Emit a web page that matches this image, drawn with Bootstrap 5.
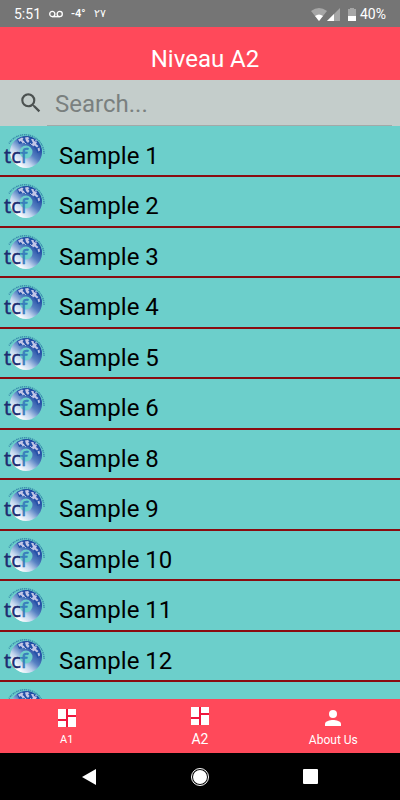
<!DOCTYPE html>
<html lang="en">
<head>
<meta charset="utf-8">
<meta name="viewport" content="width=device-width, initial-scale=1">
<title>Niveau A2</title>
<link href="https://cdn.jsdelivr.net/npm/bootstrap@5.3.0/dist/css/bootstrap.min.css" rel="stylesheet">
<style>
  body { font-family: Roboto, "Liberation Sans", sans-serif; background: #6ccfcb; }
  svg { display: block; flex: none; }
  .status-bar { height: 27px; background: #757575; color: #fff; font-size: 14px; line-height: 20px; padding: 1px 14px 0; }
  .status-bar .status-note { font-size: 11px; }
  .title-bar { height: 53px; background: #ff495a; color: #fff; padding: 9px 0 0 10px; }
  .title-bar h1 { font-size: 24px; line-height: 46px; font-weight: 400; }
  .search-bar { height: 46px; background: #c4cdcb; padding: 0 8px 0 18px; }
  .search-bar input { border: 0; border-bottom: 1px solid #a2a9a8; border-radius: 0; background: transparent; font-size: 24px; line-height: 36px; padding: 6px 8px 3px; margin-left: 3px; }
  .search-bar input:focus { background: transparent; box-shadow: none; border-color: #757575; }
  .search-bar input::placeholder { color: #7a807f; opacity: 1; }
  .sample-list { min-height: 0; background: #6ccfcb; padding-top: 1px; }
  .sample-list a { display: flex; height: 50px; border-bottom: 2px solid #8a0c10; color: #000; text-decoration: none; font-size: 24px; line-height: 30px; padding: 3px 0 0 2px; }
  .sample-list li:nth-child(even) a { height: 51px; }
  .sample-list .sample-name { padding: 11px 0 0 11px; }
  .tab-bar { height: 54px; background: #ff495a; }
  .tab-bar a { color: #fff; text-decoration: none; font-size: 11px; line-height: 16px; padding-top: 10px; gap: 5px; }
  .tab-bar a.about { font-size: 12px; }
  .tab-bar a.current { font-size: 14px; padding-top: 8px; gap: 6px; }
  .system-bar { height: 47px; background: #000; padding: 0 34px; }
  .system-bar button { background: none; border: 0; padding: 0; }
</style>
</head>
<body>
<svg width="0" height="0" class="position-absolute" aria-hidden="true">
  <defs>
    <linearGradient id="globe" x1="0.3" y1="0.95" x2="0.9" y2="0.3">
      <stop offset="0" stop-color="#ffffff"/><stop offset="0.3" stop-color="#c3d6ee"/><stop offset="0.6" stop-color="#5580c2"/><stop offset="1" stop-color="#1c429c"/>
    </linearGradient>
    <linearGradient id="letter" x1="0" x2="1"><stop offset="0" stop-color="#2a62ae"/><stop offset="1" stop-color="#3f8cc4"/></linearGradient>
    <symbol id="tcf" viewBox="0 0 46 44">
      <path d="M7 13.500A19 19 0 0 1 42 24" fill="none" stroke="#2b7aa3" stroke-width="1.500" stroke-dasharray="1 .8 1.600 .6" opacity=".75"/>
      <path fill="url(#globe)" fill-rule="evenodd" d="M24 6a16 16 0 1 0 0 32a16 16 0 1 0 0-32zM24 15.500a6.500 6.500 0 1 1 0 13a6.500 6.500 0 1 1 0-13z"/>
      <path fill="#2450a8" d="M15 9Q23 4 33 9Q39 14 39.500 21L35.500 23Q33 16 28 14.500Q23 12 17 14Z"/>
      <path fill="#c3c6e6" d="M16 9.500l4-2 1.500 1-1 1.500 2 1.500-1.500 1.500-2.500-2-1 1zM23 7.500l3-.5 1.500 1.500-1.500.5 1.500 2-1.500 2-2-2zM29 9l2.500 0 .5 2 3 1-1 2 2.500 2-1.500 1.500-2.500-2-1.500 1-1.500-2.500 1.500-1zM35.500 18.500l2-1 .5 3-1.500 1z"/>
      <path fill="none" stroke="#dfe2f3" stroke-width=".7" d="M20 13l2-1 2 2M33 10l2 1M28 13l2 2"/>
      <text x="2" y="33" font-family="Open Sans, sans-serif" font-size="20" stroke-width=".5" stroke="#1b2c70" fill="#1b2c70">tc<tspan fill="url(#letter)" stroke="#2f6fb5">f</tspan></text>
    </symbol>
    <symbol id="board" viewBox="3 3 18 18"><path fill="#f0173e" d="M3 3h18v18H3z"/><path fill="#fff" d="M3 3h8v10H3zM13 3H21v6h-8zM3 15h8V21H3zM13 11H21v10h-8z"/></symbol>
  </defs>
</svg>
<div class="d-flex flex-column vh-100 overflow-hidden">
  <div class="status-bar d-flex align-items-center flex-shrink-0">
    <span>5:51</span>
    <svg class="ms-2 me-1" width="14" height="9" viewBox="0 0 14 9" fill="none" stroke="#fff" stroke-width="1.300"><circle cx="3.300" cy="4" r="2.600"/><circle cx="10.700" cy="4" r="2.600"/><path d="M3.300 6.700h7.400"/></svg>
    <span class="status-note fw-semibold ms-1">-4°</span>
    <span class="status-note ms-2" lang="ar">٢٧</span>
    <div class="d-flex align-items-center ms-auto">
      <svg width="16" height="13" viewBox="0 0 16 13"><path fill="#a6a6a6" d="M0 3Q8-3 16 3L8 13z"/><path fill="#fff" d="M4 8Q8 5 12 8L8 13z"/></svg>
      <svg class="me-2" width="13" height="13" viewBox="0 0 13 13"><path fill="#a6a6a6" d="M0 13L13 0v13z"/><path fill="#fff" d="M0 13L7 6v7z"/></svg>
      <svg class="me-1" width="8" height="13" viewBox="0 0 8 13"><path fill="#a6a6a6" d="M2 0h4v1h2v7H0V1h2z"/><path fill="#fff" d="M0 8h8v5H0z"/></svg>
      <span>40%</span>
    </div>
  </div>
  <header class="title-bar text-center flex-shrink-0"><h1 class="m-0">Niveau A2</h1></header>
  <form class="search-bar d-flex align-items-center flex-shrink-0" role="search">
    <label for="query"><svg width="26" height="26" viewBox="0 0 24 24" fill="#4b5150" aria-label="Search"><path d="M15.500 14h-.79l-.28-.27A6.471 6.471 0 0 0 16 9.500 6.500 6.500 0 1 0 9.500 16c1.610 0 3.090-.59 4.230-1.570l.27.280v.79l5 4.990L20.490 19l-4.990-5zm-6 0C7.010 14 5 11.990 5 9.500S7.010 5 9.500 5 14 7.010 14 9.500 11.990 14 9.500 14z"/></svg></label>
    <input id="query" class="form-control" type="text" placeholder="Search...">
  </form>
  <ul class="sample-list list-unstyled m-0 flex-grow-1 overflow-hidden">
    <li><a href="#s1"><svg width="46" height="44"><use href="#tcf"/></svg><span class="sample-name">Sample 1</span></a></li>
    <li><a href="#s2"><svg width="46" height="44"><use href="#tcf"/></svg><span class="sample-name">Sample 2</span></a></li>
    <li><a href="#s3"><svg width="46" height="44"><use href="#tcf"/></svg><span class="sample-name">Sample 3</span></a></li>
    <li><a href="#s4"><svg width="46" height="44"><use href="#tcf"/></svg><span class="sample-name">Sample 4</span></a></li>
    <li><a href="#s5"><svg width="46" height="44"><use href="#tcf"/></svg><span class="sample-name">Sample 5</span></a></li>
    <li><a href="#s6"><svg width="46" height="44"><use href="#tcf"/></svg><span class="sample-name">Sample 6</span></a></li>
    <li><a href="#s8"><svg width="46" height="44"><use href="#tcf"/></svg><span class="sample-name">Sample 8</span></a></li>
    <li><a href="#s9"><svg width="46" height="44"><use href="#tcf"/></svg><span class="sample-name">Sample 9</span></a></li>
    <li><a href="#s10"><svg width="46" height="44"><use href="#tcf"/></svg><span class="sample-name">Sample 10</span></a></li>
    <li><a href="#s11"><svg width="46" height="44"><use href="#tcf"/></svg><span class="sample-name">Sample 11</span></a></li>
    <li><a href="#s12"><svg width="46" height="44"><use href="#tcf"/></svg><span class="sample-name">Sample 12</span></a></li>
    <li><a href="#next"><svg width="46" height="44"><use href="#tcf"/></svg></a></li>
  </ul>
  <nav class="tab-bar row g-0 flex-shrink-0">
    <a class="col d-flex flex-column align-items-center" href="#a1"><svg width="18" height="18"><use href="#board"/></svg><span>A1</span></a>
    <a class="col d-flex flex-column align-items-center current" href="#a2" aria-current="page"><svg width="18" height="18"><use href="#board"/></svg><span>A2</span></a>
    <a class="col d-flex flex-column align-items-center about" href="#about"><svg width="18" height="18" viewBox="0 0 18 18" fill="#fff"><circle cx="9" cy="5" r="4"/><path d="M1 17v-2c0-3 5-4 8-4s8 1 8 4v2z"/></svg><span>About Us</span></a>
  </nav>
  <div class="system-bar row g-0 flex-shrink-0">
    <button class="col d-flex align-items-center justify-content-center" type="button" aria-label="Back"><svg width="14" height="16" viewBox="0 0 14 16" fill="#fff"><path d="M14 0v16L0 8z"/></svg></button>
    <button class="col d-flex align-items-center justify-content-center" type="button" aria-label="Home"><svg width="18" height="18" viewBox="0 0 18 18"><circle cx="9" cy="9" r="8.500" fill="none" stroke="#fff"/><circle cx="9" cy="9" r="7" fill="#fff"/></svg></button>
    <button class="col d-flex align-items-center justify-content-center" type="button" aria-label="Recent apps"><svg width="15" height="15" viewBox="0 0 15 15" fill="#fff"><rect width="15" height="15" rx="1"/></svg></button>
  </div>
</div>
<script src="https://cdn.jsdelivr.net/npm/bootstrap@5.3.0/dist/js/bootstrap.bundle.min.js"></script>
</body>
</html>
